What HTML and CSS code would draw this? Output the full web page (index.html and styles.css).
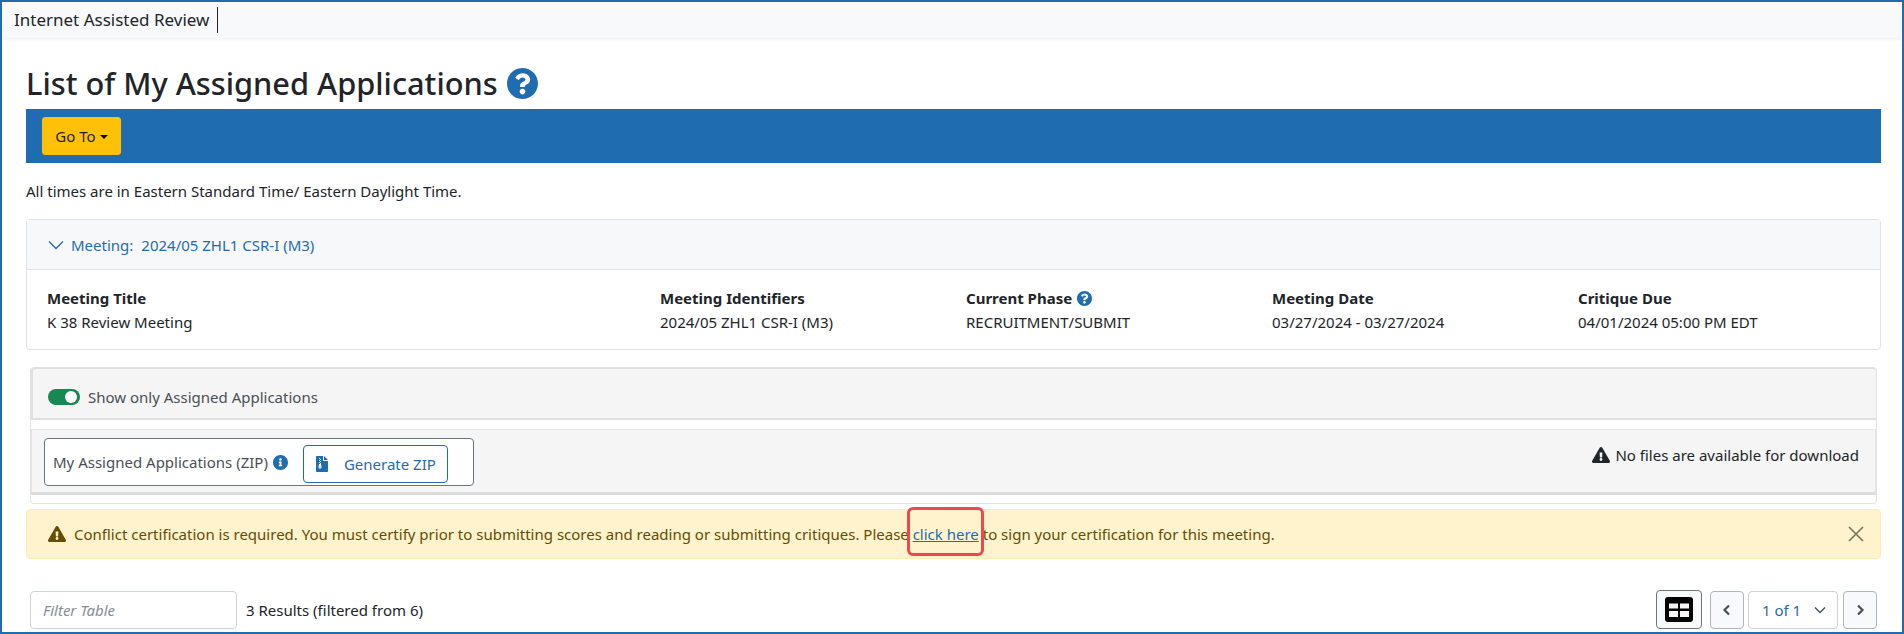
FILE: index.html
```html
<!DOCTYPE html>
<html lang="en">
<head>
<meta charset="utf-8">
<title>List of My Assigned Applications</title>
<link rel="stylesheet" href="styles.css">
</head>
<body>
<div class="frame">
  <header class="topbar"><span class="brand">Internet Assisted Review</span></header>
  <main class="content">
    <h1 class="title">List of My Assigned Applications
      <svg class="title-help" viewBox="8 8 496 496"><path fill="#1f6cb0" d="M504 256c0 136.997-111.043 248-248 248S8 392.997 8 256C8 119.083 119.043 8 256 8s248 111.083 248 248zM262.655 90c-54.497 0-89.255 22.957-116.549 63.758-3.536 5.286-2.353 12.415 2.715 16.258l34.699 26.31c5.205 3.947 12.621 3.008 16.665-2.122 17.864-22.658 30.113-35.797 57.303-35.797 20.429 0 45.698 13.148 45.698 32.958 0 14.976-12.363 22.667-32.534 33.976C247.128 238.528 216 254.941 216 296v4c0 6.627 5.373 12 12 12h56c6.627 0 12-5.373 12-12v-1.333c0-28.462 83.186-29.647 83.186-106.667 0-58.002-60.165-102-116.531-102zM256 338c-25.365 0-46 20.635-46 46 0 25.364 20.635 46 46 46s46-20.636 46-46c0-25.365-20.635-46-46-46z"/></svg>
    </h1>
    <nav class="actionbar"><button class="goto">Go To<span class="caret"></span></button></nav>
    <p class="note">All times are in Eastern Standard Time/ Eastern Daylight Time.</p>

    <section class="card">
      <div class="card-head">
        <svg class="chev" viewBox="0 0 16 16"><path fill="none" stroke="#1f6cb0" stroke-width="1.3" d="M1 4.500l7 7 7-7"/></svg>
        <span class="meet-label">Meeting:</span><span class="meet-val">2024/05 ZHL1 CSR-I (M3)</span>
      </div>
      <div class="card-body">
        <div><div class="lbl">Meeting Title</div><div>K 38 Review Meeting</div></div>
        <div><div class="lbl">Meeting Identifiers</div><div>2024/05 ZHL1 CSR-I (M3)</div></div>
        <div><div class="lbl">Current Phase
          <svg class="help-sm" viewBox="8 8 496 496"><path fill="#1f6cb0" d="M504 256c0 136.997-111.043 248-248 248S8 392.997 8 256C8 119.083 119.043 8 256 8s248 111.083 248 248zM262.655 90c-54.497 0-89.255 22.957-116.549 63.758-3.536 5.286-2.353 12.415 2.715 16.258l34.699 26.31c5.205 3.947 12.621 3.008 16.665-2.122 17.864-22.658 30.113-35.797 57.303-35.797 20.429 0 45.698 13.148 45.698 32.958 0 14.976-12.363 22.667-32.534 33.976C247.128 238.528 216 254.941 216 296v4c0 6.627 5.373 12 12 12h56c6.627 0 12-5.373 12-12v-1.333c0-28.462 83.186-29.647 83.186-106.667 0-58.002-60.165-102-116.531-102zM256 338c-25.365 0-46 20.635-46 46 0 25.364 20.635 46 46 46s46-20.636 46-46c0-25.365-20.635-46-46-46z"/></svg></div><div>RECRUITMENT/SUBMIT</div></div>
        <div><div class="lbl">Meeting Date</div><div>03/27/2024 - 03/27/2024</div></div>
        <div><div class="lbl">Critique Due</div><div>04/01/2024 05:00 PM EDT</div></div>
      </div>
    </section>

    <section class="panel">
      <div class="toggle-row">
        <span class="switch"><span class="knob"></span></span>
        <span>Show only Assigned Applications</span>
      </div>
      <div class="zip-row">
        <div class="zip-box">
          <span>My Assigned Applications (ZIP)</span>
          <svg class="info" viewBox="8 8 496 496"><path fill="#1f6cb0" d="M256 8C119.043 8 8 119.083 8 256c0 136.997 111.043 248 248 248s248-111.003 248-248C504 119.083 392.957 8 256 8zm0 110c23.196 0 42 18.804 42 42s-18.804 42-42 42-42-18.804-42-42 18.804-42 42-42zm56 254c0 6.627-5.373 12-12 12h-88c-6.627 0-12-5.373-12-12v-24c0-6.627 5.373-12 12-12h12v-64h-12c-6.627 0-12-5.373-12-12v-24c0-6.627 5.373-12 12-12h64c6.627 0 12 5.373 12 12v100h12c6.627 0 12 5.373 12 12v24z"/></svg>
          <button class="gen">
            <svg class="zip-icon" viewBox="0 0 384 512"><path fill="#1f6cb0" d="M224 0H32C14 0 0 14 0 32v448c0 18 14 32 32 32h320c18 0 32-14 32-32V160H256c-18 0-32-14-32-32V0zM96 64h32v32H96V64zm32 32h32v32h-32V96zM96 128h32v32H96v-32zm32 32h32v32h-32v-32zM96 192h32v32H96v-32zm32 32h32v32h-32v-32zM96 256h64l16 96c4 30-18 56-48 56s-52-26-48-56l16-96zm16 88c-4 14 4 30 16 30s20-16 16-30zM256 0v128h128z"/></svg>
            Generate ZIP
          </button>
        </div>
        <div class="no-files">
          <svg class="warn" viewBox="0 0 576 512"><path fill="#212529" d="M569.517 440.013C587.975 472.007 564.806 512 527.94 512H48.054c-36.937 0-59.999-40.055-41.577-71.987L246.423 23.985c18.467-32.009 64.72-31.951 83.154 0l239.94 416.028zM288 354c-25.405 0-46 20.595-46 46s20.595 46 46 46 46-20.595 46-46-20.595-46-46-46zm-43.673-165.346l7.418 136c.347 6.364 5.609 11.346 11.982 11.346h48.546c6.373 0 11.635-4.982 11.982-11.346l7.418-136c.375-6.874-5.098-12.654-11.982-12.654h-63.383c-6.884 0-12.356 5.78-11.981 12.654z"/></svg>
          No files are available for download
        </div>
      </div>
    </section>

    <section class="alert">
      <svg class="warn alert-icon" viewBox="0 0 576 512"><path fill="#664d03" d="M569.517 440.013C587.975 472.007 564.806 512 527.94 512H48.054c-36.937 0-59.999-40.055-41.577-71.987L246.423 23.985c18.467-32.009 64.72-31.951 83.154 0l239.94 416.028zM288 354c-25.405 0-46 20.595-46 46s20.595 46 46 46 46-20.595 46-46-20.595-46-46-46zm-43.673-165.346l7.418 136c.347 6.364 5.609 11.346 11.982 11.346h48.546c6.373 0 11.635-4.982 11.982-11.346l7.418-136c.375-6.874-5.098-12.654-11.982-12.654h-63.383c-6.884 0-12.356 5.78-11.981 12.654z"/></svg>
      <span class="alert-text">Conflict certification is required. You must certify prior to submitting scores and reading or submitting critiques. Please <a class="link" href="#">click here</a> to sign your certification for this meeting.</span>
      <svg class="close" viewBox="0 0 16 16"><path stroke="#7c7564" stroke-width="1.7" fill="none" d="M1 1l14 14M15 1L1 15"/></svg>
    </section>

    <div class="tools">
      <div class="filter">Filter Table</div>
      <span class="results">3 Results (filtered from 6)</span>
      <div class="pager">
        <button class="grid-btn">
          <svg class="grid-icon" viewBox="0 0 28 25"><rect width="28" height="25" rx="3" fill="#000"/><rect x="4" y="6.500" width="9" height="5" fill="#f5f5f5"/><rect x="15" y="6.500" width="9" height="5" fill="#f5f5f5"/><rect x="4" y="14" width="9" height="6" fill="#f5f5f5"/><rect x="15" y="14" width="9" height="6" fill="#f5f5f5"/></svg>
        </button>
        <button class="page-btn prev"><svg class="arrow" viewBox="0 0 10 12"><path fill="none" stroke="#495057" stroke-width="2.200" d="M7 1.500L2.500 6 7 10.500"/></svg></button>
        <button class="page-sel">1 of 1<svg class="sel-chev" viewBox="0 0 12 8"><path fill="none" stroke="#495057" stroke-width="1.400" d="M1 1.500l5 5 5-5"/></svg></button>
        <button class="page-btn"><svg class="arrow" viewBox="0 0 10 12"><path fill="none" stroke="#495057" stroke-width="2.200" d="M3 1.500L7.500 6 3 10.500"/></svg></button>
      </div>
    </div>
  </main>
</div>
</body>
</html>
```
FILE: styles.css
```css
* { box-sizing: border-box; }
html, body { margin: 0; height: 100%; background: #fff; }
body { font-family: "Noto Sans", sans-serif; font-size: 15px; line-height: 24px; color: #212529; overflow: hidden; }
button { font-family: inherit; }
.frame { height: 634px; border: 2px solid #1f6cb0; overflow: hidden; }
.topbar { height: 36px; background: #f8f9fa; display: flex; align-items: center; padding-left: 12px; box-shadow: 0 1px 4px rgba(0,0,0,.08); }
.brand { font-size: 17px; line-height: 26px; color: #212529; padding-right: 8px; border-right: 1px solid #212529; }
.content { padding: 0 21px 0 24px; }
.title { margin: 0; height: 71px; padding-top: 19px; font-size: 30.75px; line-height: 40px; font-weight: 500; color: #212529; display: flex; align-items: center; gap: 9px; }
.title-help { width: 31px; height: 31px; }
.actionbar { height: 54px; background: #1f6cb0; padding: 8px 16px; }
.goto { width: 79px; height: 38px; background: #ffc107; border: 1px solid #ffc107; border-radius: 3px; color: #212529; font-size: 15px; padding: 0; }
.caret { display: inline-block; margin-left: 4px; vertical-align: 3px; border-top: 4px solid #000; border-left: 4px solid transparent; border-right: 4px solid transparent; }
.note { margin: 0; padding-top: 16px; height: 56px; }
.card { height: 131px; border: 1px solid #dfe1e3; border-radius: 4px; }
.card-head { height: 50px; background: #f7f8fa; border-bottom: 1px solid #dfe1e3; display: flex; align-items: center; padding-left: 21px; color: #1f6cb0; }
.chev { width: 16px; height: 16px; margin-right: 7px; }
.meet-val { margin-left: 8px; }
.card-body { display: grid; grid-template-columns: 613px 306px 306px 306px 1fr; padding: 16px 20px 0; }
.lbl { font-weight: 700; }
.help-sm { width: 15px; height: 15px; vertical-align: -2px; margin-left: 1px; }
.panel { margin: 17px 4px 0; height: 137px; border: 1px solid #e2e3e5; border-radius: 4px; border-top: 0; }
.toggle-row { height: 53px; background: #f5f5f5; border: 2px solid #e0e0e0; border-width: 2px 0 2px 2px; border-radius: 4px 4px 0 0; display: flex; align-items: center; gap: 8px; padding: 6px 0 0 15px; color: #495057; }
.switch { width: 32px; height: 16px; border-radius: 8px; background: #198754; display: flex; align-items: center; justify-content: flex-end; padding-right: 3px; }
.knob { width: 12px; height: 12px; border-radius: 50%; background: #fff; }
.zip-row { margin-top: 9px; height: 66px; background: #f5f5f5; border: 1px solid #e6e6e6; border-bottom: 3px solid #dcdcdc; display: flex; justify-content: space-between; padding: 8px 16px 0 12px; }
.zip-box { width: 430px; height: 48px; border: 1px solid #6c757d; border-radius: 4px; background: #fff; display: flex; align-items: center; padding-left: 8px; color: #495057; }
.info { width: 15px; height: 15px; margin-left: 5px; }
.gen { margin-left: 15px; width: 145px; height: 38px; background: #fff; border: 1px solid #1f6cb0; border-radius: 4px; color: #1f6cb0; font-size: 15px; display: flex; align-items: center; padding: 0 0 0 12px; margin-top: 4px; }
.zip-icon { width: 12px; height: 16px; margin-right: 16px; }
.no-files { display: flex; align-items: center; height: 34px; gap: 5px; }
.warn { width: 18px; height: 16px; }
.alert { position: relative; margin-top: 5px; height: 50px; background: #fff3cd; border: 1px solid #ffecb5; border-radius: 4px; color: #664d03; display: flex; align-items: center; padding-left: 21px; }
.alert-icon { margin-right: 8px; }
.alert-text { flex: 1; }
.link { position: relative; color: #1f6cb0; text-decoration: underline; }
.link::after { content: ""; position: absolute; left: -6px; right: -5px; top: -17px; height: 43px; border: 3px solid #f04848; border-radius: 6px; }
.close { width: 16px; height: 16px; margin-right: 16px; }
.tools { margin: 31px 4px 0; display: flex; align-items: center; }
.filter { width: 207px; height: 38px; border: 1px solid #ced4da; border-radius: 4px; padding: 6px 12px; font-style: italic; color: #868e96; }
.results { margin-left: 9px; }
.pager { margin-left: auto; display: flex; align-items: center; }
.grid-btn { width: 46px; height: 39px; background: #f8f9fa; border: 1px solid #6c757d; border-radius: 4px; padding: 0; display: flex; align-items: center; justify-content: center; margin-right: 8px; }
.grid-icon { width: 28px; height: 25px; }
.page-btn { width: 34px; height: 38px; background: #f8f9fa; border: 1px solid #adb5bd; border-radius: 4px; padding: 0; display: flex; align-items: center; justify-content: center; }
.prev { margin-right: 4px; }
.arrow { width: 10px; height: 12px; }
.page-sel { width: 90px; height: 38px; margin-right: 5px; background: #fff; border: 1px solid #ced4da; border-radius: 4px; color: #1f6cb0; font-size: 15px; display: flex; align-items: center; padding: 0 0 0 13px; }
.sel-chev { width: 12px; height: 8px; margin-left: 13px; }
```
